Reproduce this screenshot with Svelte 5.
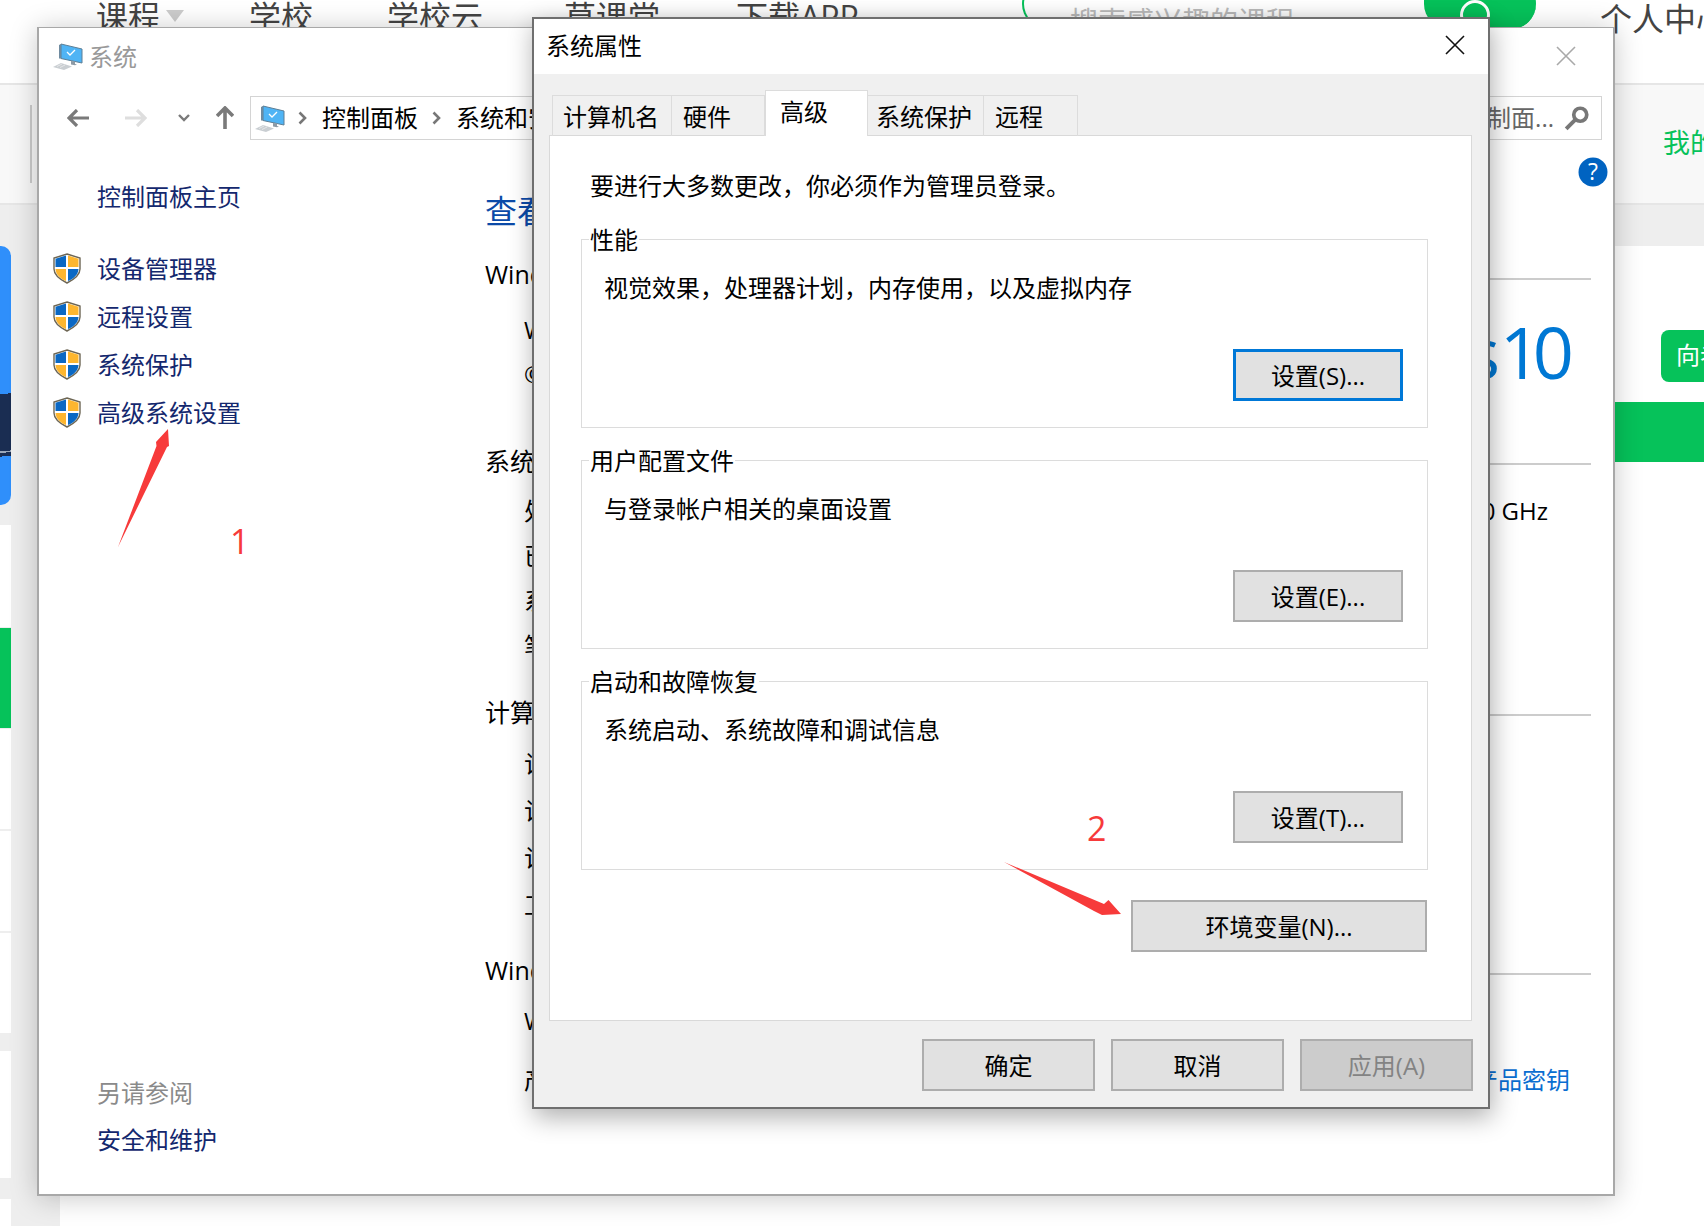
<script>
	const navItems = ['学校', '学校云', '草课堂', '下载APP'];
	const sideLinks = ['设备管理器', '远程设置', '系统保护', '高级系统设置'];
	const railCards = ['blue', 'white gap', 'green', 'white', 'white', 'white', 'white wide', 'white last'];
	// pad is where the label starts, tabs in the dialog aren't evenly sized
	const tabs = [
		{ name: '计算机名', width: 120, pad: 10 },
		{ name: '硬件', width: 93, pad: 11 },
		{ name: '高级', width: 103, pad: 14, active: true },
		{ name: '系统保护', width: 116, pad: 8 },
		{ name: '远程', width: 94, pad: 11 }
	];
	const groups = [
		{ title: '性能', desc: '视觉效果，处理器计划，内存使用，以及虚拟内存', action: '设置(S)...', focus: true },
		{ title: '用户配置文件', desc: '与登录帐户相关的桌面设置', action: '设置(E)...' },
		{ title: '启动和故障恢复', desc: '系统启动、系统故障和调试信息', action: '设置(T)...' }
	];
</script>

{#snippet computer(w, h)}
	<svg width={w} height={h} viewBox="0 0 31 27" class="pc">
		<path d="M9 1 30 6V20L9 15.500Z" fill="#4fb4f5" stroke="#5d7f96" stroke-width="1" />
		<path d="M9 1 7 2V15.500L9 15.500Z" fill="#6f8ba0" />
		<path d="m15 9 3 3 5-5" fill="none" stroke="#fff" stroke-width="1.300" />
		<path d="M19 18v3.500l4 .8 2-.8-2-.5v-2.400Z" fill="#8d9aa5" />
		<path d="M1 24 9 20l11 3.500-8 3.500Z" fill="#c9ced2" />
		<path d="M5 23.500l5-2.500M8 24.500l5-2.500" stroke="#f2f2f2" stroke-width=".7" />
	</svg>
{/snippet}

{#snippet shield()}
	<svg width="28" height="31" viewBox="0 0 28 31" class="shield">
		<path d="M14 1 27 5V16C27 23 20 27 14 30 8 27 1 23 1 16V5Z" fill="#fff" stroke="#6d6654" stroke-width="1.400" />
		<path d="M13 2.500 2.500 5.700V14H13Z" fill="#0a68c4" />
		<path d="M15 2.500 25.500 5.700V14H15Z" fill="#fdb62f" />
		<path d="M2.500 16H13V28C8 26 2.800 22 2.500 16Z" fill="#fdb62f" />
		<path d="M25.500 16H15V28C20 26 25.200 22 25.500 16Z" fill="#0a68c4" />
	</svg>
{/snippet}

<div class="desktop">
	<!-- the site behind the windows -->
	<header class="site-top">
		<nav class="site-nav">
			<span class="nav-first">课程<i class="caret"></i></span>
			{#each navItems as item}
				<span>{item}</span>
			{/each}
		</nav>
		<div class="site-search">
			<span class="placeholder">搜索感兴趣的课程</span>
			<span class="search-btn"><i></i></span>
		</div>
		<span class="site-user">个人中心</span>
	</header>
	<div class="site-sub">
		<i class="sub-rule"></i>
		<span class="sub-mine">我的课程</span>
	</div>
	<div class="site-band"></div>
	<div class="site-body">
		<aside class="rail">
			{#each railCards as card}
				<div class="rail-card {card}"></div>
			{/each}
		</aside>
		<div class="promo">
			<span class="promo-btn">向老师提问</span>
			<div class="promo-bar"></div>
		</div>
	</div>

	<!-- control panel window -->
	<section class="win system">
		<div class="win-title">
			{@render computer(31, 27)}
			<span>系统</span>
			<svg class="x" width="20" height="20" viewBox="0 0 20 20"><path d="M1 1 19 19M19 1 1 19" stroke="#a9a9a9" stroke-width="1.600" /></svg>
		</div>
		<div class="toolbar">
			<svg width="22" height="18" viewBox="0 0 22 18"><path d="M22 9H3M10 1 2 9l8 8" fill="none" stroke="#7a7a7a" stroke-width="3.200" /></svg>
			<svg class="fwd" width="22" height="18" viewBox="0 0 22 18"><path d="M0 9H19M12 1l8 8-8 8" fill="none" stroke="#dedede" stroke-width="3.200" /></svg>
			<svg class="drop" width="12" height="8" viewBox="0 0 12 8"><path d="M1 1l5 5 5-5" fill="none" stroke="#7a7a7a" stroke-width="2.400" /></svg>
			<svg class="up" width="18" height="23" viewBox="0 0 18 23"><path d="M9 23V3M1 10l8-8 8 8" fill="none" stroke="#7a7a7a" stroke-width="3.600" /></svg>
			<div class="address">
				<div class="crumbs">
					{@render computer(31, 27)}
					<svg class="sep" width="9" height="14" viewBox="0 0 9 14"><path d="M1.500 1.500 7 7l-5.500 5.500" fill="none" stroke="#777" stroke-width="2.600" /></svg>
					<span>控制面板</span>
					<svg class="sep" width="9" height="14" viewBox="0 0 9 14"><path d="M1.500 1.500 7 7l-5.500 5.500" fill="none" stroke="#777" stroke-width="2.600" /></svg>
					<span>系统和安全</span>
				</div>
				<div class="finder">
					<span>搜索控制面...</span>
					<svg width="26" height="26" viewBox="0 0 24 24"><circle cx="15" cy="9" r="6" fill="none" stroke="#777" stroke-width="3.400" /><path d="M10.500 13.500 2 22" stroke="#777" stroke-width="3.600" /></svg>
				</div>
			</div>
		</div>
		<div class="win-body">
			<aside class="side">
				<a class="home">控制面板主页</a>
				<ul class="side-list">
					{#each sideLinks as link}
						<li>{@render shield()}<a>{link}</a></li>
					{/each}
				</ul>
				<div class="see-also">
					<span>另请参阅</span>
					<a>安全和维护</a>
				</div>
			</aside>
			<div class="info">
				<h1>查看有关计算机的基本信息</h1>
				<div class="sec-head first"><span>Windows 版本</span><i></i></div>
				<div class="edition">
					<div class="rows">
						<p>Windows 10 专业版</p>
						<p>© 2019 Microsoft Corporation。保留所有权利。</p>
					</div>
					<span class="brand">Windows 10</span>
				</div>
				<div class="sec-head"><span>系统</span><i></i></div>
				<div class="spec">
					<p><span>处理器：</span><span class="val">Intel(R) Core(TM) CPU 2.90 GHz</span></p>
					<p>已安装的内存(RAM)：</p>
					<p>系统类型：</p>
					<p>笔和触控：</p>
				</div>
				<div class="sec-head"><span>计算机名、域和工作组设置</span><i></i></div>
				<div class="names">
					<p>计算机名：</p>
					<p>计算机全名：</p>
					<p>计算机描述：</p>
					<p>工作组：</p>
				</div>
				<div class="sec-head last"><span>Windows 激活</span><i></i></div>
				<div class="activate">
					<p>Windows 已激活</p>
					<p class="product"><span>产品 ID：</span><a>更改产品密钥</a></p>
				</div>
			</div>
		</div>
		<svg class="help" width="30" height="30" viewBox="0 0 30 30"><circle cx="15" cy="15" r="14.500" fill="#0063c1" /><text x="15" y="23" text-anchor="middle" fill="#fff" font-size="23" font-family="Open Sans, sans-serif">?</text></svg>
	</section>

	<!-- system properties dialog -->
	<section class="win dialog">
		<div class="dlg-title">
			<span>系统属性</span>
			<svg width="20" height="20" viewBox="0 0 20 20"><path d="M1 1 19 19M19 1 1 19" stroke="#111" stroke-width="1.600" /></svg>
		</div>
		<div class="dlg-body">
			<div class="tabs">
				{#each tabs as tab}
					<span class="tab" class:active={tab.active} style="width:{tab.width}px;padding-left:{tab.pad}px">{tab.name}</span>
				{/each}
			</div>
			<div class="panel">
				<p class="note">要进行大多数更改，你必须作为管理员登录。</p>
				{#each groups as group}
					<div class="group">
						<span class="legend">{group.title}</span>
						<p class="desc">{group.desc}</p>
						<button class="btn set" class:focus={group.focus}>{group.action}</button>
					</div>
				{/each}
				<button class="btn env">环境变量(N)...</button>
			</div>
			<div class="dlg-foot">
				<button class="btn ok">确定</button>
				<button class="btn">取消</button>
				<button class="btn off">应用(A)</button>
			</div>
		</div>
	</section>

	<!-- annotations drawn over the screenshot -->
	<svg class="marks" width="1704" height="1226" viewBox="0 0 1704 1226">
		<path d="M118 547 156.500 446 156 442 168 429 169 446 167 447Z" fill="#f73a3a" />
		<path d="M1004 862 1104 904 1108.500 900 1121 914 1102 915 1094 911Z" fill="#f73a3a" />
	</svg>
	<span class="mark-num one">1</span>
	<span class="mark-num two">2</span>
</div>

<style>
	:global(body) {
		margin: 0;
		overflow: hidden;
	}
	* {
		box-sizing: border-box;
	}
	p,
	h1,
	ul {
		margin: 0;
		padding: 0;
		font-weight: 400;
	}
	li {
		list-style: none;
	}
	i {
		display: block;
	}
	svg {
		display: block;
		flex: none;
	}

	.desktop {
		position: relative;
		width: 1704px;
		height: 1226px;
		overflow: hidden;
		background: #fff;
		color: #000;
		font-family: 'Open Sans', 'Noto Sans CJK SC', sans-serif;
		font-size: 24px;
	}

	/* site behind */
	.site-top {
		display: flex;
		height: 83px;
		color: #444;
		font-size: 32px;
		line-height: 34px;
	}
	.site-nav {
		display: flex;
		flex: none;
		gap: 76px;
		width: 1022px;
		padding-left: 96px;
		white-space: nowrap;
	}
	.site-nav span:nth-child(2) {
		margin-right: -2px;
	}
	.site-nav span:nth-child(3) {
		margin-right: 5px;
	}
	.nav-first {
		display: flex;
		margin-right: -11px;
	}
	.caret {
		width: 0;
		height: 0;
		margin: 10px 0 0 6px;
		border: 9px solid transparent;
		border-top: 12px solid #ccc;
		border-bottom: 0;
	}
	.site-search {
		display: flex;
		flex: none;
		justify-content: space-between;
		width: 514px;
		height: 50px;
		margin-top: -21px;
		border: 2px solid #06c25a;
		border-radius: 25px;
		border-right: 0;
	}
	.placeholder {
		margin: 22px 0 0 46px;
		color: #bbb;
		font-size: 28px;
		line-height: 36px;
	}
	.search-btn {
		display: flex;
		justify-content: center;
		width: 112px;
		height: 50px;
		margin-top: -2px;
		padding: 21px 10px 0 0;
		border-radius: 0 25px 25px 25px;
		background: #06c25a;
	}
	.search-btn i {
		width: 30px;
		height: 30px;
		border: 3px solid #fff;
		border-radius: 50%;
	}
	.site-user {
		flex: none;
		margin-left: 64px;
		padding-top: 2px;
		white-space: nowrap;
	}
	.site-sub {
		display: flex;
		justify-content: space-between;
		align-items: center;
		height: 122px;
		padding-left: 30px;
		border-top: 2px solid #e6e6e6;
		border-bottom: 2px solid #e6e6e6;
		background: #f8f8f8;
	}
	.sub-rule {
		width: 2px;
		height: 78px;
		background: #ccc;
	}
	.sub-mine {
		width: 41px;
		padding-bottom: 6px;
		overflow: hidden;
		color: #06c25a;
		font-size: 27px;
		white-space: nowrap;
	}
	.site-band {
		height: 41px;
		background: #eee;
	}
	.site-body {
		display: flex;
		height: 980px;
	}
	.rail {
		width: 60px;
		background: #eee;
	}
	.rail-card {
		width: 11px;
		height: 100px;
		margin-bottom: 2px;
		background: #fff;
	}
	.rail-card.blue {
		height: 259px;
		margin-bottom: 20px;
		border-radius: 0 10px 10px 0;
		background: linear-gradient(174deg, #2f8ffb 0 57%, #1a2d52 57% 79%, #9aa6b8 79% 79.600%, #1a2d52 79.600% 81%, #2f8ffb 81%);
	}
	.rail-card.gap {
		height: 102px;
		margin-bottom: 1px;
	}
	.rail-card.green {
		margin-bottom: 1px;
		background: #06c25a;
	}
	.rail-card.wide {
		height: 127px;
		margin-top: 18px;
		margin-bottom: 21px;
	}
	.rail-card.last {
		height: 30px;
	}
	.promo {
		width: 90px;
		margin-left: auto;
	}
	.promo-btn {
		display: block;
		width: 80px;
		height: 52px;
		margin: 84px 0 0 47px;
		padding-left: 15px;
		overflow: hidden;
		border-radius: 8px 0 0 8px;
		background: #06c25a;
		color: #fff;
		line-height: 50px;
		white-space: nowrap;
	}
	.promo-bar {
		height: 60px;
		margin-top: 20px;
		background: #06c25a;
	}

	/* windows */
	.win {
		position: absolute;
		display: flex;
		flex-direction: column;
	}
	.system {
		left: 37px;
		top: 27px;
		width: 1578px;
		height: 1169px;
		border: 2px solid #a8a8a8;
		border-top-width: 1px;
		background: #fff;
		box-shadow: 0 2px 26px rgba(0, 0, 0, 0.22);
	}
	.win-title {
		display: flex;
		align-items: center;
		gap: 6px;
		height: 55px;
		padding-left: 13px;
		color: #999;
	}
	.win-title .x {
		margin-left: auto;
		margin-right: 37px;
	}
	.pc {
		margin-top: 2px;
	}
	.toolbar {
		display: flex;
		align-items: center;
		height: 69px;
		padding: 0 11px 0 28px;
	}
	.fwd {
		margin-left: 36px;
	}
	.drop {
		margin-left: 31px;
	}
	.up {
		margin: 0 16px 0 26px;
	}
	.address {
		display: flex;
		flex: 1;
		justify-content: space-between;
		align-items: center;
		height: 44px;
		padding: 0 11px 0 3px;
		border: 1px solid #d4d4d4;
	}
	.crumbs {
		display: flex;
		align-items: center;
		line-height: 40px;
		white-space: nowrap;
	}
	.crumbs .pc {
		margin-right: -1px;
	}
	.sep {
		margin: 0 15px 0 14px;
	}
	.finder {
		display: flex;
		align-items: center;
		gap: 10px;
		color: #666;
		line-height: 40px;
		white-space: nowrap;
	}
	.win-body {
		display: flex;
		flex: 1;
	}
	.side {
		display: flex;
		flex-direction: column;
		flex: none;
		width: 446px;
		padding: 21px 0 31px 14px;
		color: #14286e;
		line-height: 48px;
	}
	.home {
		padding-left: 44px;
	}
	.side-list {
		margin-top: 24px;
	}
	.side-list li {
		display: flex;
		align-items: center;
		gap: 16px;
		height: 48px;
	}
	.shield {
		margin-top: -2px;
	}
	.see-also {
		display: flex;
		flex-direction: column;
		margin-top: auto;
		padding-left: 44px;
		line-height: 47px;
	}
	.see-also span {
		color: #8a8a8a;
	}
	.info {
		flex: 1;
		min-width: 0;
		padding: 36px 22px 0 0;
		white-space: nowrap;
	}
	h1 {
		color: #0b4aa8;
		font-size: 32px;
		line-height: 46px;
	}
	.sec-head {
		display: flex;
		align-items: center;
		gap: 12px;
		height: 40px;
		font-size: 25px;
	}
	.sec-head.first {
		margin-top: 19px;
	}
	.sec-head i {
		flex: 1;
		height: 2px;
		margin-top: 8px;
		background: #ccc;
	}
	.sec-head.first i {
		margin-top: 12px;
	}
	.sec-head.last i {
		margin-top: 10px;
	}
	.edition,
	.spec,
	.names,
	.activate {
		padding-left: 39px;
	}
	.edition {
		display: flex;
		justify-content: space-between;
		height: 147px;
		padding-top: 15px;
	}
	.edition p {
		height: 44px;
		line-height: 44px;
	}
	.brand {
		margin: 5px 25px 0 0;
		color: #0078d4;
		font-size: 72px;
		font-weight: 400;
		letter-spacing: -8px;
		word-spacing: -3px;
		line-height: 76px;
	}
	.spec {
		height: 211px;
		padding-top: 8px;
	}
	.spec p {
		display: flex;
		justify-content: space-between;
		height: 45px;
		padding-right: 43px;
		line-height: 45px;
	}
	.names {
		height: 218px;
		padding-top: 9px;
	}
	.names p {
		height: 47px;
		line-height: 47px;
	}
	.activate {
		padding-top: 9px;
	}
	.activate p {
		height: 46px;
		line-height: 46px;
	}
	.activate .product {
		display: flex;
		justify-content: space-between;
		margin-top: 13px;
		padding-right: 21px;
	}
	.product a {
		color: #0a6ed1;
	}
	.help {
		position: absolute;
		right: 5px;
		top: 129px;
	}

	.dialog {
		left: 532px;
		top: 17px;
		width: 958px;
		height: 1092px;
		border: 2px solid #6f6f6f;
		background: #fff;
		box-shadow: 2px 8px 24px rgba(0, 0, 0, 0.32);
	}
	.dlg-title {
		display: flex;
		justify-content: space-between;
		align-items: center;
		height: 55px;
		padding: 0 23px 3px 12px;
	}
	.dlg-title span {
		margin-top: -2px;
	}
	.dlg-body {
		flex: 1;
		padding: 16px 16px 0 15px;
		background: #f0f0f0;
	}
	.tabs {
		display: flex;
		align-items: flex-end;
		height: 46px;
		margin-bottom: -1px;
		padding-left: 3px;
		position: relative;
	}
	.tab {
		height: 41px;
		border: 1px solid #dcdcdc;
		border-bottom: 0;
		border-left-width: 0;
		line-height: 42px;
		white-space: nowrap;
	}
	.tab:first-child {
		border-left-width: 1px;
	}
	.tab.active {
		height: 46px;
		background: #fff;
		line-height: 42px;
		border-left-width: 1px;
	}
	.panel {
		display: flex;
		flex-direction: column;
		height: 886px;
		padding: 30px 43px 0 31px;
		border: 1px solid #d9d9d9;
		background: #fff;
	}
	.note {
		padding-left: 9px;
		line-height: 40px;
	}
	.group {
		display: flex;
		flex-direction: column;
		flex: none;
		height: 189px;
		margin-top: 32px;
		border: 1px solid #dcdcdc;
	}
	.note + .group {
		margin-top: 33px;
	}
	.legend {
		align-self: flex-start;
		margin: -16px 0 0 7px;
		padding: 0 1px;
		background: #fff;
		line-height: 32px;
	}
	.desc {
		margin: 14px 0 0 22px;
		line-height: 36px;
	}
	.btn {
		height: 52px;
		padding: 0 0 2px;
		border: 2px solid #adadad;
		border-radius: 0;
		background: #e1e1e1;
		color: #000;
		font: inherit;
	}
	.set {
		align-self: flex-end;
		width: 170px;
		margin: 43px 24px 0 0;
	}
	.set.focus {
		border: 3px solid #0078d7;
	}
	.env {
		align-self: flex-end;
		width: 296px;
		margin: 30px 1px 0 0;
	}
	.dlg-foot {
		display: flex;
		justify-content: flex-end;
		gap: 16px;
		margin: 18px -1px 0 0;
	}
	.dlg-foot .btn {
		width: 173px;
	}
	.dlg-foot .off {
		background: #ccc;
		color: #838383;
	}

	/* annotations */
	.marks {
		position: absolute;
		left: 0;
		top: 0;
		pointer-events: none;
	}
	.mark-num {
		position: absolute;
		color: #f73a3a;
		font-size: 34px;
		line-height: 40px;
	}
	.one {
		left: 230px;
		top: 521px;
	}
	.two {
		left: 1087px;
		top: 808px;
	}
</style>
